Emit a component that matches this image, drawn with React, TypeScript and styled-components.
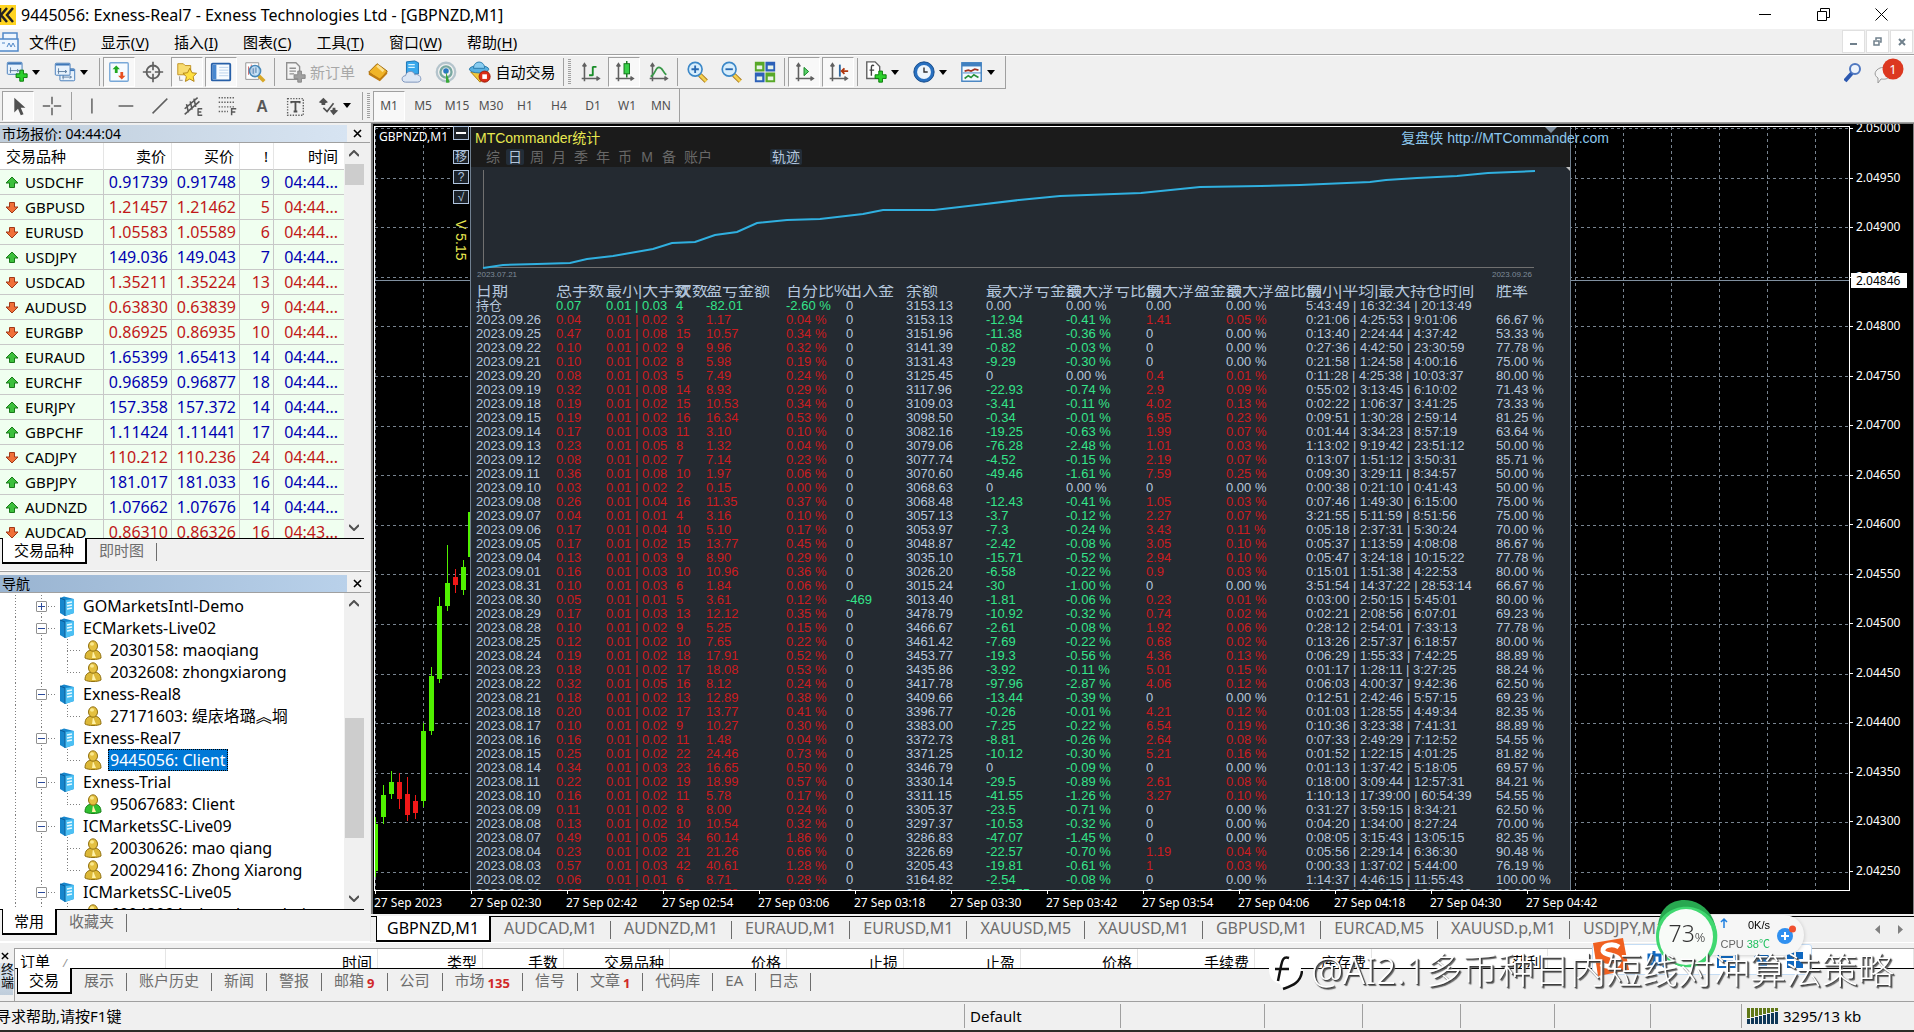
import React from "react";
import styled, { createGlobalStyle, css } from "styled-components";

const ui = `"Noto Sans", "Noto Sans CJK SC", sans-serif`;
const arial = `"Liberation Sans", "Noto Sans CJK SC", sans-serif`;

const Global = createGlobalStyle`
  *, *::before, *::after { box-sizing: border-box; }
  html, body, #root { height: 100%; margin: 0; }
  body { overflow: hidden; background: #f0f0f0; font: 15px/20px ${ui}; color: #000; }
  button { font: inherit; color: inherit; border: 0; background: none; padding: 0; margin: 0; white-space: nowrap; }
  ul { list-style: none; margin: 0; padding: 0; }
  svg { display: block; flex: none; }
`;

/* ---------- frame ---------- */
const Window = styled.div`
  display: flex; flex-direction: column; height: 100%; min-width: 1200px;
  background: #f0f0f0; border-bottom: 2px solid #2c2c26; overflow: hidden;
`;
const TitleBar = styled.header`
  display: flex; align-items: center; height: 29px; background: #fff; flex: none; padding-right: 4px;
`;
const Title = styled.h1`
  margin: 0 auto 0 5px; font-size: 16px; line-height: 28px; font-weight: 400; white-space: nowrap;
`;
const WinButton = styled.button`
  width: 58px; height: 28px; display: grid; place-items: center;
`;
const MenuBar = styled.nav`
  display: flex; align-items: center; height: 26px; flex: none; border-bottom: 1px solid #a0a0a0;
`;
const MenuItem = styled.button`
  margin-left: 10px; margin-right: 15px; line-height: 24px;
  u { text-underline-offset: 2px; }
`;
const MdiButtons = styled.div`
  display: flex; gap: 1px; margin-left: auto; padding-right: 1px;
`;
const MdiButton = styled.button`
  width: 23px; height: 23px; background: #fff; border: 1px solid #e0e0e0; display: grid; place-items: center;
`;

/* ---------- toolbars ---------- */
const Bars = styled.div`
  flex: none; border-top: 1px solid #fff; display: flex; flex-direction: column; border-bottom: 1px solid #a0a0a0;
`;
const BarLine = styled.div`
  display: flex; height: 33px; justify-content: space-between;
`;
const Bar = styled.div<{ $lined?: boolean }>`
  display: flex; align-items: center; gap: 2px; height: 33px; padding: 0 2px;
  border-right: 1px solid #a0a0a0;
  ${(p) => p.$lined && css`border-bottom: 1px solid #a0a0a0;`}
`;
const Tool = styled.button<{ $on?: boolean; $w?: number; $menu?: boolean }>`
  display: flex; align-items: center; justify-content: center; gap: 3px; flex: none;
  width: ${(p) => p.$w ?? (p.$menu ? 46 : 32)}px; height: 30px; color: #505050; font-size: 12px;
  ${(p) => p.$menu && css`justify-content: flex-start; padding-left: 3px; color: #000;`}
  ${(p) => p.$on && css`
    background: #f8f8f8; border: 1px solid #a0a0a0; border-right-color: #fff; border-bottom-color: #fff;
  `}
`;
const LabelTool = styled(Tool)<{ $off?: boolean }>`
  font-size: 15px; color: ${(p) => (p.$off ? "#a8a8a8" : "#000")};
`;
const Sep = styled.span`
  width: 1px; height: 28px; background: #a0a0a0; margin: 0 1px; flex: none;
`;
const Grip = styled.span`
  width: 3px; height: 26px; margin: 0 1px; flex: none;
  background: repeating-linear-gradient(#a0a0a0 0 1px, transparent 1px 2px);
`;
const BarEnd = styled.div`
  display: flex; align-items: center; gap: 8px; padding-right: 8px;
`;

/* ---------- docked panels ---------- */
const Main = styled.main`
  flex: 1; min-height: 0; display: flex;
`;
const Dock = styled.div`
  width: 370px; flex: none; display: flex; flex-direction: column;
`;
const Panel = styled.section<{ $grow?: boolean }>`
  display: flex; flex-direction: column; min-height: 0; padding-top: 2px;
  flex: ${(p) => (p.$grow ? "1 1 0" : "0 0 448px")};
  ${(p) => p.$grow && css`border-top: 1px solid #a0a0a0; padding-top: 3px;`}
  border-bottom: 1px solid #fff;
`;
const PanelTitle = styled.header<{ $active?: boolean }>`
  display: flex; height: 18px; flex: none; padding-right: 3px; border-bottom: 1px solid #a0a0a0;
  h2 {
    margin: 0; flex: 1; font-size: 14px; font-weight: 400; line-height: 17px; padding-left: 2px;
    background: ${(p) =>
      p.$active ? "linear-gradient(90deg,#99b4d1,#b9d1ea)" : "linear-gradient(90deg,#bfcddb,#d7e4f2)"};
  }
  button { width: 20px; display: grid; place-items: center; }
`;
const PanelBody = styled.div`
  flex: 1; min-height: 0; display: flex; overflow: hidden; background: #fff; margin-right: 6px;
  border-bottom: 1px solid #000;
`;
const TabRow = styled.div`
  display: flex; height: 31px; flex: none; padding-left: 2px; align-items: flex-start;
`;
const Tab = styled.button<{ $on?: boolean }>`
  height: 22px; padding: 0 13px 0 12px; font-size: 15px; line-height: 22px; color: #6d6d6d; flex: none;
  display: flex; align-items: center; position: relative;
  &::after { content: ""; position: absolute; right: 0; top: 4px; height: 18px; width: 1px; background: #6d6d6d; }
  ${(p) => p.$on && css`
    color: #000; background: #fff; border: 1px solid #000; border-width: 0 2px 2px 1px; margin-top: -1px; height: 26px;
    padding: 0 11px;
    &::after { display: none; }
  `}
`;
const Count = styled.b`
  color: #d02828; font-size: 13px; padding: 6px 0 0 3px;
`;
const Scroll = styled.div`
  width: 20px; flex: none; background: #f0f0f0; display: flex; flex-direction: column; align-items: center;
  svg { margin: 7px 0; }
`;
const Thumb = styled.span<{ $before: number; $size: number }>`
  width: 19px; height: ${(p) => p.$size}px; margin-top: ${(p) => p.$before}px; margin-bottom: auto; background: #cdcdcd;
`;

/* ---------- market watch ---------- */
const Quotes = styled.table`
  width: 344px; table-layout: fixed; border-collapse: separate; border-spacing: 0; flex: none; align-self: flex-start;
  th, td {
    height: 25px; padding: 0 3px 0 0; text-align: right; font-weight: 400; line-height: 20px; white-space: nowrap;
    border-right: 1px solid #c8c8c8; border-bottom: 1px solid #c8c8c8; overflow: hidden;
  }
  th { height: 27px; font-size: 15px; border-right-color: #e5e5e5; padding-right: 5px; }
  td { font-size: 16px; }
  th:first-child { text-align: left; padding-left: 6px; }
  td:last-child, th:last-child { border-right: 0; padding-right: 6px; }
`;
const QuoteRow = styled.tr<{ $up: boolean }>`
  background: #f0fff0; color: ${(p) => (p.$up ? "#0000b0" : "#c01818")};
`;
const SymbolCell = styled.span`
  display: flex; align-items: center; gap: 6px; padding-left: 5px; color: #000; font-size: 15px;
`;

/* ---------- navigator ---------- */
const Tree = styled.ul`
  flex: 1; min-width: 0; padding-top: 2px;
`;
const dots = "repeating-linear-gradient(#808080 0 1px, transparent 1px 3px)";
const dotsH = "repeating-linear-gradient(90deg, #808080 0 1px, transparent 1px 3px)";
const Node = styled.li<{ $child?: boolean; $last?: boolean }>`
  height: 22px; display: flex; align-items: center; white-space: nowrap; font-size: 16px;
  background:
    ${dots} 15px 0 / 1px 22px no-repeat,
    ${dots} 41px 0 / 1px 22px no-repeat,
    ${dotsH} ${(p) => (p.$child ? "67px 11px / 15px 1px" : "48px 11px / 8px 1px")} no-repeat
    ${(p) => p.$child && css`, ${dots} 67px 0 / 1px ${p.$last ? 11 : 22}px no-repeat`};
  padding-left: ${(p) => (p.$child ? 84 : 36)}px;
`;
const Expander = styled.button`
  width: 11px; height: 11px; border: 1px solid #919191; background: #fff; color: #2b4a9b; border-radius: 1px;
  margin-right: 12px; display: grid; place-items: center;
`;
const NodeLabel = styled.span<{ $on?: boolean }>`
  line-height: 20px; padding: 0 1px; border: 1px solid transparent; margin-left: 6px;
  ${(p) => p.$on && css`background: #0078d7; color: #fff; border: 1px dotted #000;`}
`;

/* ---------- chart ---------- */
const ChartColumn = styled.div`
  flex: 1; min-width: 0; display: flex; flex-direction: column; border-left: 1px solid #e8e8e8;
`;
const ChartWindow = styled.div`
  flex: 1; min-height: 0; background: #000; overflow: hidden; border: 2px solid #808080; border-width: 1px 1px 0 2px;
  padding: 2px 0 0 1px; display: grid; grid-template: 1fr 23px / 1fr 63px; color: #fff; font-size: 12px; line-height: 16px;
`;
const Plot = styled.div`
  position: relative; border: 1px solid #fff; min-height: 0;
`;
const Canvas = styled.svg`
  position: absolute; inset: 0; width: 100%; height: 100%;
`;
const PlotName = styled.span`
  position: absolute; left: 4px; top: 2px; font-size: 12px;
`;
const SideTools = styled.div`
  position: absolute; left: 78px; top: -1px; display: flex; flex-direction: column; gap: 6px; color: #b0c4de;
`;
const SideButton = styled.button`
  width: 16px; height: 14px; border: 1px solid #b0c4de; background: #1c2229; font: 12px/12px ${arial};
  display: grid; place-items: center;
  &:first-child { margin-bottom: 4px; }
`;
const Version = styled.span`
  writing-mode: vertical-rl; color: #e8e850; font: 14px/16px ${arial}; margin-top: 10px;
`;
const PriceAxis = styled.div`
  margin-top: -6px; padding-bottom: 12px; display: flex; flex-direction: column; justify-content: space-between;
  position: relative;
  span { padding-left: 6px; position: relative; }
  span::before { content: ""; position: absolute; left: 0; top: 8px; width: 3px; height: 1px; background: #fff; }
`;
const LastPrice = styled.output`
  position: absolute; left: 1px; top: 153px; width: 56px; height: 15px; line-height: 15px; padding-left: 5px; background: #fff; color: #000;
`;
const TimeAxis = styled.div`
  display: flex; overflow: hidden; grid-column: 1 / 3;
  span { width: 96px; flex: none; white-space: nowrap; padding-top: 4px; position: relative; }
  span::before { content: ""; position: absolute; left: 1px; top: 0; height: 3px; width: 1px; background: #fff; }
`;

/* ---------- statistics overlay ---------- */
const Stats = styled.section`
  position: absolute; left: 95px; top: 0; bottom: 0; width: 1101px; background: #242a31; color: #b4c6dc;
  border: 1px solid #708090; border-width: 0 1px; font: 13px/14px ${arial}; display: flex; flex-direction: column;
`;
const StatsHead = styled.header`
  background: #1b1b1b; height: 40px; flex: none;
`;
const StatsTitle = styled.div`
  display: flex; justify-content: space-between; height: 22px; align-items: center; padding-left: 4px; margin-right: -39px;
  font-size: 14px; line-height: 22px; color: #e8e850;
  a { color: #8cc8ee; text-decoration: none; white-space: nowrap; }
`;
const StatsTabs = styled.div`
  display: flex; gap: 4px; padding-left: 13px;
`;
const StatsTab = styled.button<{ $on?: boolean; $far?: boolean }>`
  min-width: 18px; height: 16px; padding: 0 2px; font-size: 14px; line-height: 16px; color: #686868; border-radius: 2px;
  ${(p) => p.$on && css`color: #b4c6dc; background: #232d38;`}
  ${(p) => p.$far && css`margin-left: 52px;`}
`;
const CurveDates = styled.div`
  display: flex; justify-content: space-between; height: 15px; flex: none; padding: 0 38px 0 6px;
  font-size: 8px; line-height: 10px; color: #7f8b99;
`;
const StatsClip = styled.div`
  flex: 1; min-height: 0; overflow: hidden; padding-left: 5px;
`;
const StatsTable = styled.table`
  table-layout: fixed; width: 1090px; border-collapse: collapse;
  th, td { height: 14px; padding: 0; line-height: 14px; text-align: left; font-weight: 400; white-space: nowrap; }
  th { font-size: 16px; line-height: 12px; vertical-align: top; }
`;
type Tone = "plain" | "up" | "down";
const tones: Record<Tone, string> = { plain: "#b4c6dc", up: "#cc1c20", down: "#34e48a" };
const StatCell = styled.td<{ $tone: Tone }>`
  color: ${(p) => tones[p.$tone]};
`;

const ChartTabs = styled(TabRow)`
  height: 26px; border-top: 1px solid #000; background: #f0f0f0; padding: 0 0 0 5px; flex: none; margin-top: 2px;
`;
const ChartTab = styled(Tab)`
  padding: 0 14px 0 13px; font-size: 16px;
  ${(p) => p.$on && css`padding: 0 10px;`}
`;
const TabArrows = styled.div`
  margin-left: auto; display: flex; gap: 18px; padding: 8px 11px;
`;

/* ---------- terminal ---------- */
const Terminal = styled.section`
  flex: none; height: 59px; display: flex; padding-top: 5px; border-top: 1px solid #fff;
`;
const TerminalGrip = styled.div`
  width: 14px; flex: none; display: flex; flex-direction: column; align-items: flex-start;
  button { height: 15px; width: 9px; display: grid; place-items: center; }
  span {
    writing-mode: vertical-rl; height: 32px; width: 13px; font-size: 13px; line-height: 13px;
    background: linear-gradient(0deg,#bfcddb,#d7e4f2);
  }
`;
const TerminalBody = styled.div`
  flex: 1; min-width: 0; display: flex; flex-direction: column; border-left: 1px solid #a0a0a0;
`;
const Orders = styled.div`
  height: 21px; flex: none; overflow: hidden; background: #fff; border-top: 1px solid #a0a0a0; border-bottom: 1px solid #000;
`;
const OrdersTable = styled.table`
  table-layout: fixed; width: 100%; border-spacing: 0;
  th { font-weight: 400; padding: 0 5px; height: 25px; text-align: right; border-right: 1px solid #e5e5e5; white-space: nowrap; }
  th:first-child { text-align: left; }
  i { margin-left: 13px; color: #909090; font-size: 11px; }
`;
const StatusBar = styled.footer`
  flex: none; height: 29px; border-top: 1px solid #a0a0a0; display: flex; align-items: center; line-height: 26px; overflow: hidden;
`;
const StatusCell = styled.span<{ $w?: number }>`
  ${(p) => (p.$w ? css`width: ${p.$w}px; border-left: 1px solid #a0a0a0; padding-left: 5px;` : css`flex: 1; margin-left: -4px;`)}
  height: 24px; line-height: 24px; display: flex; align-items: center; gap: 5px; white-space: nowrap;
`;

/* ---------- floating items ---------- */
const Watermark = styled.div`
  position: fixed; right: 20px; bottom: 37px; display: flex; align-items: center; gap: 8px; color: #fff; z-index: 3;
  font: 300 36px/48px ${ui}; white-space: nowrap; text-shadow: 1px 1px 1px #333, 2px 2px 1px #666;
`;
const Ime = styled.div`
  position: fixed; right: 102px; bottom: 57px; width: 220px; height: 31px; background: #fff; border: 1px solid #c4dcf4;
  border-radius: 3px; display: flex; align-items: center; gap: 17px; z-index: 1;
  svg:first-child { margin: -6px 0 0 -1px; }
`;
const Monitor = styled.div`
  position: fixed; right: 110px; bottom: 61px; z-index: 2; display: flex; align-items: center;
`;
const Ball = styled.div`
  position: relative; width: 66px; height: 72px; margin-right: -14px; display: grid; place-items: center; z-index: 1;
  svg { position: absolute; inset: 0; }
  span { position: relative; font-size: 23px; font-weight: 300; color: #333; small { font-size: 13px; } }
`;
const Pill = styled.div`
  display: flex; align-items: center; height: 40px; width: 98px; border-radius: 0 20px 20px 0; background: #f6f6f6;
  padding: 0 8px 0 19px; gap: 6px; justify-content: flex-end; box-shadow: 0 1px 4px #0003;
  font: 11px/19px ${arial};
`;
const Readings = styled.div`
  display: flex; flex-direction: column; white-space: nowrap; color: #666;
  div { display: flex; justify-content: space-between; color: #000; }
  em { font-style: normal; color: #22c060; }
`;

/* ---------- icons ---------- */
const Ico = ({ children, s = 24 }: { children: React.ReactNode; s?: number }) => (
  <svg width={s} height={s} viewBox="-1 -1 26 26" fill="none">{children}</svg>
);
const Caret = () => <svg width="8" height="5" viewBox="0 0 8 5"><path d="M0 0h8L4 5z" /></svg>;
const Cross = ({ s = 9 }: { s?: number }) => (
  <svg width={s} height={s} viewBox="0 0 9 9" stroke="#000" strokeWidth="1.6"><path d="M1 1l7 7M8 1L1 8" /></svg>
);
const Chevron = ({ down }: { down?: boolean }) => (
  <svg width="10" height="7" viewBox="0 0 10 7" fill="none" stroke="#505050" strokeWidth="2">
    <path d={down ? "M0 1l5 5 5-5" : "M0 6l5-5 5 5"} />
  </svg>
);
const Arrow = ({ up }: { up: boolean }) => (
  <svg width="14" height="13" viewBox="0 0 14 13" strokeWidth="1">
    {up
      ? <path d="M7 1l6 6H9.500v4.500h-5V7H1z" fill="#3cc03c" stroke="#187818" />
      : <path d="M7 12l6-6H9.500V1.500h-5V6H1z" fill="#f07038" stroke="#a03818" />}
  </svg>
);
const Server = () => (
  <svg width="16" height="20" viewBox="0 0 16 20">
    <path d="M1 2l4-1.500L15 3v14l-9 3-5-3z" fill="#1686cc" /><path d="M6 4l9-1v14l-9 3z" fill="#4cc0f4" />
    <path d="M8 7l5-1M8 10l5-1M8 13l5-1" stroke="#e8faff" strokeWidth="1.500" />
    <path d="M1 2l5 2v16" fill="none" stroke="#0c5c98" />
  </svg>
);
const Person = ({ online }: { online?: boolean }) => (
  <svg width="18" height="20" viewBox="0 0 18 20">
    <path d="M1 18c0-5 2-8 8-8s8 3 8 8c-3 2-13 2-16 0z" fill={online ? "#30c030" : "#dcb838"} stroke={online ? "#188018" : "#907010"} />
    <path d="M9 11l3 7H8z" fill="#fff2a8" />
    <ellipse cx="9" cy="6" rx="4.500" ry="5.200" fill="#e4c040" stroke="#907010" />
    <ellipse cx="8" cy="4" rx="2" ry="1.800" fill="#fae88c" />
  </svg>
);
const Axes = () => <path d="M6 4v18M3 19h18M4 6l2-3 2 3M19 17l3 2-3 2" stroke="#606060" strokeWidth="1.700" />;
const Plus = ({ x, y }: { x: number; y: number }) => (
  <path transform={`translate(${x} ${y})`} d="M4 0h4v4h4v4H8v4H4V8H0V4h4z" fill="#2cd02c" stroke="#087808" />
);
const Win = ({ x, y }: { x: number; y: number }) => (
  <g transform={`translate(${x} ${y})`}><rect x=".5" y=".5" width="16" height="13" rx="1" fill="#e8f2fc" stroke="#4078b8" /><path d="M1 2h15" stroke="#4078b8" strokeWidth="2" /><path d="M3 9.500h10M4 6v6M11 8l2 1.500-2 1.500" stroke="#5a7ca0" /></g>
);
const Glass = ({ minus }: { minus?: boolean }) => (
  <Ico>
    <path d="M15 15l7 7" stroke="#a87818" strokeWidth="5" /><path d="M15 15l7 7" stroke="#f4d050" strokeWidth="3" />
    <circle cx="10" cy="9" r="7.500" fill="#d8eefc" stroke="#3c88c8" strokeWidth="1.800" />
    <path d={minus ? "M6 9h8" : "M6 9h8M10 5v8"} stroke="#2868b0" strokeWidth="2" />
  </Ico>
);
const icons: Record<string, React.ReactNode> = {
  newChart: <Ico><Win x={1} y={1} /><Plus x={11} y={10} /></Ico>,
  profiles: <Ico><Win x={6} y={8} /><Win x={1} y={2} /></Ico>,
  watch: <Ico><rect x="2" y="2" width="20" height="20" rx="1" fill="#f6fbff" stroke="#78a8d8" strokeWidth="1.500" /><path d="M9 5l4 4h-2.500v4h-3V9H5z" fill="#20a820" /><path d="M15 20l4-4h-2.500v-4h-3v4H11z" fill="#e85020" /></Ico>,
  target: <Ico><circle cx="12" cy="12" r="7" stroke="#606060" strokeWidth="2" /><path d="M12 1v9M12 14v9M1 12h9M14 12h9" stroke="#606060" strokeWidth="1.800" /></Ico>,
  favs: <Ico><path d="M2 3h6l2 2h6v10H2z" fill="#f8dc70" stroke="#c09020" /><path d="M4 17v4h4" stroke="#333" strokeDasharray="1 1" /><path d="M15 8l2.400 4.800 5 .6-3.700 3.600 1 5.200-4.700-2.600-4.700 2.600 1-5.200-3.700-3.600 5-.6z" fill="#ffe040" stroke="#b08010" /></Ico>,
  nav: <Ico><rect x="2" y="3" width="20" height="18" rx="1" fill="#f8fcff" stroke="#2860a8" strokeWidth="2" /><path d="M3 4h4v16H3z" fill="#4888d0" /><path d="M10 7h10M10 10h10M10 13h10M10 16h10" stroke="#b8d0ec" /></Ico>,
  tester: <Ico><path d="M2 2h14v18H2z" fill="#fff" stroke="#909090" /><path d="M5 6v9M8 4v9M11 7v9" stroke="#d06060" /><path d="M16 16l6 6" stroke="#d8a828" strokeWidth="4" /><circle cx="12" cy="11" r="6" fill="#b8dcf8cc" stroke="#4888b8" strokeWidth="1.800" /><path d="M10 8v6M13 7v6" stroke="#4070a0" /></Ico>,
  order: <Ico><path d="M3 2h10l4 4v14H3z" fill="#f4f4f4" stroke="#909090" strokeWidth="1.500" /><path d="M6 8h7M6 11h7M6 14h5" stroke="#909090" strokeWidth="1.500" /><path d="M15 11h4v4h4v4h-4v4h-4v-4h-4v-4h4z" fill="#a0a0a0" stroke="#888" /></Ico>,
  book: <Ico><path d="M2 12L11 3l11 8-8 10z" fill="#f0b428" stroke="#98640c" /><path d="M2 12l12 7 8-8v3l-8 8L2 15z" fill="#c07c10" /><path d="M11 5l7 6" stroke="#fce08c" strokeWidth="3" /></Ico>,
  cloud: <Ico><path d="M6 1l9-1 4 2v12H6z" fill="#38a8ec" stroke="#1870b0" /><path d="M8 4h7M8 7h7" stroke="#d8f4ff" strokeWidth="1.500" /><path d="M5 23c-5 0-5-7 0-7 1-6 9-6 10-1 7-2 9 8 3 8z" fill="#dce6f4" stroke="#7890b8" /></Ico>,
  signal: <Ico><circle cx="12" cy="12" r="10" stroke="#b4c4cc" strokeWidth="2.500" /><circle cx="12" cy="12" r="6" stroke="#78a8a0" strokeWidth="2.500" /><circle cx="12" cy="11" r="3" fill="#2878c0" /><path d="M12 12l4 11c-2 1-4 1-4 0z" fill="#38a838" /></Ico>,
  auto: <Ico><path d="M2 12l10 11 9-11z" fill="#f4c838" stroke="#a87c10" /><ellipse cx="11" cy="9" rx="10.500" ry="4" fill="#58b0e0" stroke="#2878a8" /><path d="M5 8c0-9 12-9 12 0z" fill="#88ccf0" stroke="#2878a8" /><circle cx="17" cy="17" r="6" fill="#dc2c14" stroke="#981808" /><path d="M14.500 14.500h5v5h-5z" fill="#fff" /></Ico>,
  bars: <Ico><Axes /><path d="M15 6v10M15 6.500h4M11 15.500h4" stroke="#188c28" strokeWidth="2" /></Ico>,
  candles: <Ico><Axes /><path d="M15 0v18" stroke="#107018" strokeWidth="1.500" /><rect x="12" y="3" width="6" height="11" fill="#38d048" stroke="#107018" /></Ico>,
  line: <Ico><Axes /><path d="M4 17c5-2 5-10 9-10s4 5 8 8" stroke="#389848" strokeWidth="1.800" /></Ico>,
  zoomIn: <Glass />,
  zoomOut: <Glass minus />,
  tile: <Ico><path d="M1 1h10.500v10.500H1zM12.500 12.500H23V23H12.500z" fill="#58a828" /><path d="M12.500 1H23v10.500H12.500zM1 12.500h10.500V23H1z" fill="#2c60b8" /><path d="M3 5h6v4H3zM15 5h6v4h-6zM3 17h6v4H3zM15 17h6v4h-6z" fill="#e8f4e8" /></Ico>,
  scrollEnd: <Ico><Axes /><path d="M12 7v9l5-4.500z" fill="#58d068" stroke="#108020" /></Ico>,
  shift: <Ico><Axes /><path d="M14 4v13" stroke="#3068a0" strokeWidth="2" /><path d="M23 11h-7M19 8l-3 3 3 3" stroke="#b03810" strokeWidth="2" /></Ico>,
  indicators: <Ico><path d="M2 1h9l5 5v13H2z" fill="#fff" stroke="#606060" strokeWidth="1.500" /><path d="M10 5c-3-1-3 1-3 3v8M5 10h5" stroke="#404040" strokeWidth="1.500" /><Plus x={11} y={11} /></Ico>,
  clock: <Ico><circle cx="12" cy="12" r="11" fill="#2870c0" stroke="#104888" /><circle cx="12" cy="12" r="7.500" fill="#eef6fc" /><path d="M12 7v5h4" stroke="#303030" strokeWidth="1.500" /></Ico>,
  template: <Ico><rect x="1" y="2" width="21" height="20" fill="#f4faff" stroke="#4080c0" strokeWidth="1.500" /><path d="M1 4h21" stroke="#4080c0" strokeWidth="4" /><path d="M4 11l4-1 3 1 4-2 4 1" stroke="#a03020" strokeWidth="1.800" /><path d="M4 19l4-3 3 2 3-3 5 3" stroke="#289038" strokeWidth="1.800" /><path d="M2 13h20" stroke="#4080c0" /></Ico>,
  cursor: <Ico><path d="M8 3v16l4-4 3 7 3-1-3-7h5z" fill="#505050" /></Ico>,
  cross: <Ico><path d="M12 2v8M12 14v8M2 12h8M14 12h8" stroke="#606060" strokeWidth="1.600" /></Ico>,
  vline: <Ico><path d="M13 4v16" stroke="#606060" strokeWidth="1.600" /></Ico>,
  hline: <Ico><path d="M5 12h16" stroke="#606060" strokeWidth="1.600" /></Ico>,
  trend: <Ico><path d="M5 20L21 4" stroke="#606060" strokeWidth="1.600" /></Ico>,
  channel: <Ico><path d="M3 15L17 3M3 21L19 7M5 10l2 9M9 7l2 9M13 4l2 9" stroke="#585858" strokeWidth="1.700" /><path d="M17 15h5M17 18.500h4M17 22h5M17.500 15v7" stroke="#585858" strokeWidth="1.500" /></Ico>,
  fib: <Ico><path d="M3 3h18M3 8h18M3 13h18M3 18h10" stroke="#606060" strokeWidth="1.500" strokeDasharray="1.500 1.500" /><path d="M17 22v-7h5M17 18.500h4" stroke="#585858" strokeWidth="1.600" /></Ico>,
  label: <Ico><rect x="4" y="4" width="17" height="18" stroke="#606060" strokeDasharray="1.500 1.500" strokeWidth="1.500" /><path d="M8 9V7.500h9V9M12.500 8v10M10.500 18h4" stroke="#505050" strokeWidth="2" /></Ico>,
  arrows: <Ico><path d="M7 3l5 5-3 1v2H5V9L2 8zM18 22l-4-5 3-1v-2h3v2l3 1z" fill="#505050" /><path d="M7 14l4 4 7-9" stroke="#505050" strokeWidth="1.800" /></Ico>,
};

/* ---------- data ---------- */
const menus = [["文件", "F"], ["显示", "V"], ["插入", "I"], ["图表", "C"], ["工具", "T"], ["窗口", "W"], ["帮助", "H"]];
const frames = ["M1", "M5", "M15", "M30", "H1", "H4", "D1", "W1", "MN"];
const quotes = `USDCHF 0.91739 0.91748 9 u
GBPUSD 1.21457 1.21462 5 d
EURUSD 1.05583 1.05589 6 d
USDJPY 149.036 149.043 7 u
USDCAD 1.35211 1.35224 13 d
AUDUSD 0.63830 0.63839 9 d
EURGBP 0.86925 0.86935 10 d
EURAUD 1.65399 1.65413 14 u
EURCHF 0.96859 0.96877 18 u
EURJPY 157.358 157.372 14 u
GBPCHF 1.11424 1.11441 17 u
CADJPY 110.212 110.236 24 d
GBPJPY 181.017 181.033 16 u
AUDNZD 1.07662 1.07676 14 u
AUDCAD 0.86310 0.86326 16 d`.split("\n").map((l) => l.split(" "));
const servers: { name: string; closed?: boolean; users: string[]; online?: boolean }[] = [
  { name: "GOMarketsIntl-Demo", closed: true, users: [] },
  { name: "ECMarkets-Live02", users: ["2030158: maoqiang", "2032608: zhongxiarong"] },
  { name: "Exness-Real8", users: ["27171603: 缇庡垎璐︽埛"] },
  { name: "Exness-Real7", users: ["9445056: Client"] },
  { name: "Exness-Trial", users: ["95067683: Client"], online: true },
  { name: "ICMarketsSC-Live09", users: ["20030626: mao qiang", "20029416: Zhong Xiarong"] },
  { name: "ICMarketsSC-Live05", users: ["60043094: zhuozhongzhai"] },
];
const statHeads = ["日期", "总手数", "最小|大手数", "次数", "盈亏金额", "百分比%", "出入金", "余额", "最大浮亏金额", "最大浮亏比例", "最大浮盈金额", "最大浮盈比例", "最小|平均|最大持仓时间", "胜率"];
const statWidths = [80, 50, 70, 30, 80, 60, 60, 80, 80, 80, 80, 80, 190, 70];
const stats = `09.26 0.04 0.02 3 1.17 0.04 0 3153.13 -12.94 -0.41 1.41 0.05 0:21:06 4:25:53 9:01:06 66.67
09.25 0.47 0.08 15 10.57 0.34 0 3151.96 -11.38 -0.36 0 0.00 0:13:40 2:24:44 4:37:42 53.33
09.22 0.10 0.02 9 9.96 0.32 0 3141.39 -0.82 -0.03 0 0.00 0:27:36 4:42:50 23:30:59 77.78
09.21 0.10 0.02 8 5.98 0.19 0 3131.43 -9.29 -0.30 0 0.00 0:21:58 1:24:58 4:00:16 75.00
09.20 0.08 0.03 5 7.49 0.24 0 3125.45 0 0.00 0.4 0.01 0:11:28 4:25:38 10:03:37 80.00
09.19 0.32 0.08 14 8.93 0.29 0 3117.96 -22.93 -0.74 2.9 0.09 0:55:02 3:13:45 6:10:02 71.43
09.18 0.19 0.02 15 10.53 0.34 0 3109.03 -3.41 -0.11 4.02 0.13 0:02:22 1:06:37 3:41:25 73.33
09.15 0.19 0.02 16 16.34 0.53 0 3098.50 -0.34 -0.01 6.95 0.23 0:09:51 1:30:28 2:59:14 81.25
09.14 0.17 0.03 11 3.10 0.10 0 3082.16 -19.25 -0.63 1.99 0.07 0:01:44 3:34:23 8:57:19 63.64
09.13 0.23 0.05 8 1.32 0.04 0 3079.06 -76.28 -2.48 1.01 0.03 1:13:02 9:19:42 23:51:12 50.00
09.12 0.08 0.02 7 7.14 0.23 0 3077.74 -4.52 -0.15 2.19 0.07 0:13:07 1:51:12 3:50:31 85.71
09.11 0.36 0.08 10 1.97 0.06 0 3070.60 -49.46 -1.61 7.59 0.25 0:09:30 3:29:11 8:34:57 50.00
09.10 0.03 0.02 2 0.15 0.00 0 3068.63 0 0.00 0 0.00 0:00:38 0:21:10 0:41:43 50.00
09.08 0.26 0.04 16 11.35 0.37 0 3068.48 -12.43 -0.41 1.05 0.03 0:07:46 1:49:30 6:15:00 75.00
09.07 0.04 0.01 4 3.16 0.10 0 3057.13 -3.7 -0.12 2.27 0.07 3:21:55 5:11:59 8:51:56 75.00
09.06 0.17 0.04 10 5.10 0.17 0 3053.97 -7.3 -0.24 3.43 0.11 0:05:18 2:37:31 5:30:24 70.00
09.05 0.17 0.02 15 13.77 0.45 0 3048.87 -2.42 -0.08 3.05 0.10 0:05:37 1:13:59 4:08:08 86.67
09.04 0.13 0.03 9 8.90 0.29 0 3035.10 -15.71 -0.52 2.94 0.10 0:05:47 3:24:18 10:15:22 77.78
09.01 0.16 0.03 10 10.96 0.36 0 3026.20 -6.58 -0.22 0.9 0.03 0:15:01 1:51:38 4:22:53 80.00
08.31 0.10 0.03 6 1.84 0.06 0 3015.24 -30 -1.00 0 0.00 3:51:54 14:37:22 28:53:14 66.67
08.30 0.05 0.01 5 3.61 0.12 -469 3013.40 -1.81 -0.06 0.23 0.01 0:03:00 2:50:15 5:45:01 80.00
08.29 0.17 0.03 13 12.12 0.35 0 3478.79 -10.92 -0.32 0.74 0.02 0:02:21 2:08:56 6:07:01 69.23
08.28 0.10 0.02 9 5.25 0.15 0 3466.67 -2.61 -0.08 1.92 0.06 0:28:12 2:54:01 7:33:13 77.78
08.25 0.12 0.02 10 7.65 0.22 0 3461.42 -7.69 -0.22 0.68 0.02 0:13:26 2:57:37 6:18:57 80.00
08.24 0.19 0.02 18 17.91 0.52 0 3453.77 -19.3 -0.56 4.36 0.13 0:06:29 1:55:33 7:42:25 88.89
08.23 0.18 0.02 17 18.08 0.53 0 3435.86 -3.92 -0.11 5.01 0.15 0:01:17 1:28:11 3:27:25 88.24
08.22 0.32 0.05 16 8.12 0.24 0 3417.78 -97.96 -2.87 4.06 0.12 0:06:03 4:00:37 9:42:36 62.50
08.21 0.18 0.02 13 12.89 0.38 0 3409.66 -13.44 -0.39 0 0.00 0:12:51 2:42:46 5:57:15 69.23
08.18 0.20 0.02 17 13.77 0.41 0 3396.77 -0.26 -0.01 4.21 0.12 0:01:03 1:28:55 4:49:34 82.35
08.17 0.10 0.02 9 10.27 0.30 0 3383.00 -7.25 -0.22 6.54 0.19 0:10:36 3:23:38 7:41:31 88.89
08.16 0.16 0.02 11 1.48 0.04 0 3372.73 -8.81 -0.26 2.64 0.08 0:07:33 2:49:29 7:12:52 54.55
08.15 0.25 0.02 22 24.46 0.73 0 3371.25 -10.12 -0.30 5.21 0.16 0:01:52 1:22:15 4:01:25 81.82
08.14 0.34 0.03 23 16.65 0.50 0 3346.79 0 -0.09 0 0.00 0:01:13 1:37:42 5:18:05 69.57
08.11 0.22 0.02 19 18.99 0.57 0 3330.14 -29.5 -0.89 2.61 0.08 0:18:00 3:09:44 12:57:31 84.21
08.10 0.16 0.02 11 5.78 0.17 0 3311.15 -41.55 -1.26 3.27 0.10 1:10:13 17:39:00 60:54:39 54.55
08.09 0.11 0.02 8 8.00 0.24 0 3305.37 -23.5 -0.71 0 0.00 0:31:27 3:59:15 8:34:21 62.50
08.08 0.13 0.02 10 10.54 0.32 0 3297.37 -10.53 -0.32 0 0.00 0:04:20 1:34:00 8:27:24 70.00
08.07 0.49 0.05 34 60.14 1.86 0 3286.83 -47.07 -1.45 0 0.00 0:08:05 3:15:43 13:05:15 82.35
08.04 0.23 0.02 21 21.26 0.66 0 3226.69 -22.57 -0.70 1.19 0.04 0:05:56 2:29:14 6:36:30 90.48
08.03 0.57 0.03 42 40.61 1.28 0 3205.43 -19.81 -0.61 1 0.03 0:00:33 1:37:02 5:44:00 76.19
08.02 0.06 0.01 6 8.71 0.28 0 3164.82 -2.54 -0.08 0 0.00 1:14:37 4:46:15 11:55:43 100.00
08.01 0.27 0.04 13 44.78 1.44 0 3156.11 -106.55 -3.43 0 0.00 1:48:07 15:15:53 98:17:48 69.23`.split("\n").map((l) => {
  const [d, lots, max, n, pnl, pct, io, bal, dd, ddp, mf, mfp, a, b, c, win] = l.split(" ");
  return ["2023." + d, lots, `0.01 | ${max}`, n, pnl, pct + " %", io, bal, dd, ddp + " %", mf, mfp + " %", `${a} | ${b} | ${c}`, win + " %"];
});
const open = ["持仓", "0.07", "0.01 | 0.03", "4", "-82.01", "-2.60 %", "0", "3153.13", "0.00", "0.00 %", "0.00", "0.00 %", "5:43:49 | 16:32:34 | 20:13:49", ""];
const tone = (col: number, v: string, floating: boolean): Tone => {
  if (col === 0 || col === 7 || col > 11) return "plain";
  if (col < 6) return floating ? "down" : "up";
  if (v.startsWith("-")) return "down";
  return parseFloat(v) === 0 ? "plain" : "up";
};
const prices = Array.from({ length: 16 }, (_, i) => (2.05 - i * 0.0005).toFixed(5));
const times = ["2023", "02:30", "02:42", "02:54", "03:06", "03:18", "03:30", "03:42", "03:54", "04:06", "04:18", "04:30", "04:42"];
/* x, high, body top, body bottom, low, rising */
const candles: [number, number, number, number, number, boolean][] = [
  [0, 690, 697, 744, 750, true], [8, 658, 668, 690, 697, true], [16, 644, 655, 667, 672, true], [24, 646, 655, 672, 682, false],
  [32, 650, 667, 688, 694, false], [40, 668, 674, 686, 692, false], [48, 596, 604, 674, 680, true], [56, 540, 549, 604, 608, true],
  [64, 470, 479, 552, 556, true], [72, 418, 456, 479, 484, true], [80, 442, 450, 458, 466, false], [88, 433, 440, 463, 468, true],
  [95, 385, 385, 430, 440, true],
];
const chartTabs = ["GBPNZD,M1", "AUDCAD,M1", "AUDNZD,M1", "EURAUD,M1", "EURUSD,M1", "XAUUSD,M5", "XAUUSD,M1", "GBPUSD,M1", "EURCAD,M5", "XAUUSD.p,M1", "USDJPY,M15"];
const orderCols: [string, number][] = [["订单", 151], ["时间", 212], ["类型", 105], ["手数", 81], ["交易品种", 106], ["价格", 117], ["止损", 117], ["止盈", 117], ["价格", 117], ["手续费", 117], ["库存费", 117], ["获利", 176]];
const terminalTabs: [string, string?][] = [["交易"], ["展示"], ["账户历史"], ["新闻"], ["警报"], ["邮箱", "9"], ["公司"], ["市场", "135"], ["信号"], ["文章", "1"], ["代码库"], ["EA"], ["日志"]];
const curve = "12,101 32,98 66,97 99,96 116,92 142,89 182,82 201,76 224,75 244,68 266,65 286,56 316,53 349,52 392,47 412,43 463,43 506,38 548,33 589,29 670,26 729,20 790,19 829,18 899,15 915,13 946,11 986,9 1017,6 1064,4";

const T = ({ i, on, menu, label }: { i: string; on?: boolean; menu?: boolean; label?: string }) => (
  <Tool $on={on} $menu={menu} aria-label={label ?? i}>
    {icons[i]}{menu && <Caret />}
  </Tool>
);

const Toolbars = () => (
  <Bars>
    <BarLine>
      <Bar $lined>
        <T i="newChart" menu /><T i="profiles" menu />
        <Sep />
        <T i="watch" on /><T i="target" /><T i="favs" on /><T i="nav" on /><T i="tester" />
        <Sep />
        <LabelTool $w={82} $off>{icons.order}新订单</LabelTool>
        <T i="book" /><T i="cloud" /><T i="signal" />
        <LabelTool $w={96}>{icons.auto}自动交易</LabelTool>
        <Sep /><Grip />
        <T i="bars" /><T i="candles" on /><T i="line" />
        <Sep />
        <T i="zoomIn" /><T i="zoomOut" /><T i="tile" />
        <Sep />
        <T i="scrollEnd" on /><T i="shift" on />
        <Sep />
        <T i="indicators" menu /><T i="clock" menu /><T i="template" menu />
      </Bar>
      <BarEnd>
        <svg width="18" height="20" viewBox="0 0 18 20" fill="none"><path d="M1 18l7-8" stroke="#2c58b0" strokeWidth="4" /><circle cx="11" cy="6" r="5" fill="#eef4fc" stroke="#5078c0" strokeWidth="2" /></svg>
        <svg width="36" height="32" viewBox="0 0 36 32"><path d="M10 11c9-3 14 4 9 9-3 3-6 2-8 2l-3 4v-5c-5-3-3-8 2-10z" fill="#f4f4f4" stroke="#999" /><circle cx="23" cy="12" r="10.500" fill="#dc3820" /><text x="23" y="17" textAnchor="middle" fill="#fff" fontSize="13" fontFamily="Noto Sans">1</text></svg>
      </BarEnd>
    </BarLine>
    <BarLine>
      <Bar>
        <T i="cursor" on /><T i="cross" /><Sep />
        <T i="vline" /><T i="hline" /><T i="trend" /><T i="channel" /><T i="fib" />
        <Tool><svg width="24" height="24"><text x="13" y="18" textAnchor="middle" fontSize="16" fontWeight="700" fontFamily="Liberation Sans" fill="#585858">A</text></svg></Tool>
        <T i="label" /><T i="arrows" menu />
        <Sep /><Grip />
        {frames.map((f) => <Tool key={f} $on={f === "M1"}>{f}</Tool>)}
      </Bar>
    </BarLine>
  </Bars>
);

const MarketWatch = () => (
  <Panel>
    <PanelTitle><h2>市场报价: 04:44:04</h2><button aria-label="关闭"><Cross /></button></PanelTitle>
    <PanelBody>
      <Quotes>
        <colgroup>{[104, 68, 68, 34, 70].map((w, i) => <col key={i} width={w} />)}</colgroup>
        <thead><tr>{["交易品种", "卖价", "买价", "!", "时间"].map((h) => <th key={h}>{h}</th>)}</tr></thead>
        <tbody>
          {quotes.map(([s, bid, ask, spread, dir]) => (
            <QuoteRow key={s} $up={dir === "u"}>
              <td><SymbolCell><Arrow up={dir === "u"} />{s}</SymbolCell></td>
              <td>{bid}</td><td>{ask}</td><td>{spread}</td><td>{s === "AUDCAD" ? "04:43..." : "04:44..."}</td>
            </QuoteRow>
          ))}
        </tbody>
      </Quotes>
      <Scroll><Chevron /><Thumb $before={0} $size={21} /><Chevron down /></Scroll>
    </PanelBody>
    <TabRow><Tab $on>交易品种</Tab><Tab>即时图</Tab></TabRow>
  </Panel>
);

const Navigator = () => (
  <Panel $grow>
    <PanelTitle $active><h2>导航</h2><button aria-label="关闭"><Cross /></button></PanelTitle>
    <PanelBody>
      <Tree>
        {servers.map((s) => (
          <React.Fragment key={s.name}>
            <Node>
              <Expander aria-label={s.name}>
                <svg width="7" height="7" stroke="#2b4a9b"><path d={s.closed ? "M0 3.500h7M3.500 0v7" : "M0 3.500h7"} /></svg>
              </Expander>
              <Server /><NodeLabel>{s.name}</NodeLabel>
            </Node>
            {s.users.map((u, i) => (
              <Node key={u} $child $last={i === s.users.length - 1}>
                <Person online={s.online} /><NodeLabel $on={u.startsWith("9445056")}>{u}</NodeLabel>
              </Node>
            ))}
          </React.Fragment>
        ))}
      </Tree>
      <Scroll><Chevron /><Thumb $before={104} $size={120} /><Chevron down /></Scroll>
    </PanelBody>
    <TabRow><Tab $on>常用</Tab><Tab>收藏夹</Tab></TabRow>
  </Panel>
);

const Statistics = () => (
  <Stats>
    <StatsHead>
      <StatsTitle><span>MTCommander统计</span><a href="http://MTCommander.com">复盘侠 http://MTCommander.com</a></StatsTitle>
      <StatsTabs>
        {["综", "日", "周", "月", "季", "年", "币", "M", "备", "账户"].map((t) => <StatsTab key={t} $on={t === "日"}>{t}</StatsTab>)}
        <StatsTab $on $far>轨迹</StatsTab>
      </StatsTabs>
    </StatsHead>
    <svg width="1099" height="103" fill="none">
      <path d="M12.500 3v97.500H1063" stroke="#707070" />
      <polyline points={curve} stroke="#30b0e0" strokeWidth="2" />
      <path d="M1099-4v8l-4-4z" fill="#c0c0c0" />
    </svg>
    <CurveDates><span>2023.07.21</span><span>2023.09.26</span></CurveDates>
    <StatsClip>
      <StatsTable>
        <colgroup>{statWidths.map((w, i) => <col key={i} width={w} />)}</colgroup>
        <thead><tr>{statHeads.map((h) => <th key={h}>{h}</th>)}</tr></thead>
        <tbody>
          {[open, ...stats].map((r, k) => (
            <tr key={r[0]}>{r.map((v, c) => <StatCell key={c} $tone={tone(c, v, k === 0)}>{v}</StatCell>)}</tr>
          ))}
        </tbody>
      </StatsTable>
    </StatsClip>
  </Stats>
);

const Chart = () => (
  <ChartWindow>
    <Plot>
      <Canvas>
        <g stroke="#788490" strokeDasharray="3 3" shapeRendering="crispEdges">
          {Array.from({ length: 31 }, (_, i) => <line key={i} x1={48 * i + 0.5} x2={48 * i + 0.5} y1="0" y2="100%" />)}
          {prices.map((p, i) => <line key={p} x1="0" x2="100%" y1={Math.round(1 + i * 49.6) + 0.5} y2={Math.round(1 + i * 49.6) + 0.5} />)}
        </g>
        <line x1="0" x2="100%" y1="153.500" y2="153.500" stroke="#8090a0" />
        <g shapeRendering="crispEdges">
          {candles.map(([x, h, t, b, l, up]) => {
            const c = up ? "#50f000" : "#f01818";
            return <g key={x}><line x1={x + 0.5} x2={x + 0.5} y1={h} y2={l} stroke={c} /><rect x={x - 2} y={t} width="5" height={b - t} fill={c} /></g>;
          })}
        </g>
      </Canvas>
      <PlotName>GBPNZD,M1</PlotName>
      <SideTools>
        <SideButton aria-label="最小化"><svg width="10" height="2"><rect width="10" height="2" fill="#fff" /></svg></SideButton>
        <SideButton>移</SideButton><SideButton>?</SideButton><SideButton>√</SideButton>
        <Version>V 5.15</Version>
      </SideTools>
      <Statistics />
      <Canvas pointerEvents="none"><path d="M1170 0h12l-6 6z" fill="#8090a0" /></Canvas>
    </Plot>
    <PriceAxis>
      {prices.map((p) => <span key={p}>{p}</span>)}
      <LastPrice>2.04846</LastPrice>
    </PriceAxis>
    <TimeAxis>{times.map((t) => <span key={t}>27 Sep {t}</span>)}</TimeAxis>
  </ChartWindow>
);

export default function App() {
  return (
    <Window>
      <Global />
      <TitleBar>
        <svg width="16" height="20" viewBox="0 0 16 20"><rect width="16" height="20" fill="#ffd420" /><path d="M0 3v14M7 3L1 10l6 7M13 3l-6 7 6 7" fill="none" stroke="#222" strokeWidth="2.500" /></svg>
        <Title>9445056: Exness-Real7 - Exness Technologies Ltd - [GBPNZD,M1]</Title>
        <WinButton aria-label="最小化"><svg width="12" height="1"><rect width="12" height="1" /></svg></WinButton>
        <WinButton aria-label="还原"><svg width="13" height="13" fill="none" stroke="#000"><path d="M.5 3.500h9v9h-9zM3.500 3V.5h9v9H10" /></svg></WinButton>
        <WinButton aria-label="关闭"><svg width="13" height="13" stroke="#000"><path d="M.5.5l12 12M12.500.5l-12 12" /></svg></WinButton>
      </TitleBar>
      <MenuBar>
        <svg width="19" height="20" viewBox="0 0 19 20" fill="none"><rect x="3" y="1" width="14" height="12" fill="#eef6fe" stroke="#5088c8" strokeWidth="1.500" /><rect x="-2" y="7" width="20" height="12" fill="#eef6fe" stroke="#5088c8" strokeWidth="1.500" /><path d="M2 11h3M7 15l2-4 2 4 2-4 2 4" stroke="#5088c8" /></svg>
        {menus.map(([m, k]) => <MenuItem key={k}>{m}(<u>{k}</u>)</MenuItem>)}
        <MdiButtons>
          <MdiButton aria-label="最小化图表"><svg width="7" height="7"><rect y="5" width="7" height="2" fill="#70808c" /></svg></MdiButton>
          <MdiButton aria-label="还原图表"><svg width="9" height="9" fill="none" stroke="#70808c" strokeWidth="1.500"><path d="M1 4h5v4H1zM3 3V1h5v4H7" /></svg></MdiButton>
          <MdiButton aria-label="关闭图表"><svg width="8" height="8" stroke="#70808c" strokeWidth="2"><path d="M1 1l6 6M7 1L1 7" /></svg></MdiButton>
        </MdiButtons>
      </MenuBar>
      <Toolbars />
      <Main>
        <Dock><MarketWatch /><Navigator /></Dock>
        <ChartColumn>
          <Chart />
          <ChartTabs>
            {chartTabs.map((t, i) => <ChartTab key={t} $on={i === 0}>{t}</ChartTab>)}
            <TabArrows>
              <svg width="5" height="9" fill="#808080"><path d="M5 0v9L0 4.500z" /></svg>
              <svg width="5" height="9" fill="#808080"><path d="M0 0v9l5-4.500z" /></svg>
            </TabArrows>
          </ChartTabs>
        </ChartColumn>
      </Main>
      <Terminal>
        <TerminalGrip><button aria-label="关闭"><Cross s={8} /></button><span>终端</span></TerminalGrip>
        <TerminalBody>
          <Orders>
            <OrdersTable>
              <colgroup>{orderCols.map(([, w], i) => <col key={i} width={w} />)}<col /></colgroup>
              <thead><tr>{orderCols.map(([c], i) => <th key={i}>{c}{i === 0 && <i>/</i>}</th>)}<th /></tr></thead>
            </OrdersTable>
          </Orders>
          <TabRow>
            {terminalTabs.map(([t, n], i) => <Tab key={t} $on={i === 0}>{t}{n && <Count>{n}</Count>}</Tab>)}
          </TabRow>
        </TerminalBody>
      </Terminal>
      <StatusBar>
        <StatusCell>寻求帮助,请按F1键</StatusCell>
        <StatusCell $w={156}>Default</StatusCell>
        <StatusCell $w={144} /><StatusCell $w={98} /><StatusCell $w={98} /><StatusCell $w={94} /><StatusCell $w={96} /><StatusCell $w={91} />
        <StatusCell $w={173}>
          <svg width="31" height="16">
            {Array.from({ length: 8 }, (_, i) => <g key={i}><rect x={i * 4} width="3" height={10 - i} fill="#607818" /><rect x={i * 4} y={11 - i} width="3" height={5 + i} fill="#103858" /></g>)}
          </svg>
          3295/13 kb
        </StatusCell>
      </StatusBar>
      <Ime>
        <svg width="38" height="38" viewBox="0 0 38 38"><path d="M1 5l30-5 6 32-31 6z" fill="#f06020" /><path d="M27 9c-6-4-17-2-16 4 1 5 15 3 16 9 0 7-12 8-18 4" fill="none" stroke="#fff" strokeWidth="5" /></svg>
        <svg width="22" height="20" fill="none" stroke="#1068c0" strokeWidth="3"><path d="M2 5h11v9H2zM7 1v18M18 3v8M16 17l4-4" /></svg>
        <svg width="14" height="20" fill="none" stroke="#1068c0" strokeWidth="2"><rect x="4" y="1" width="6" height="10" rx="3" /><path d="M1 9c0 8 12 8 12 0M7 15v4" /></svg>
        <svg width="20" height="16" fill="none" stroke="#1068c0" strokeWidth="2"><path d="M1 1h18v14H1zM4 5h12M4 9h12" /></svg>
        <svg width="16" height="20" fill="#1068c0"><path d="M4 3l4 2 4-2 4 4-3 2v9H3V9L0 7z" /></svg>
        <svg width="16" height="20" fill="#1068c0"><path d="M0 2h7v7H0zM9 2h7v7H9zM0 11h7v7H0zM9 11h7v7H9z" /></svg>
      </Ime>
      <Monitor>
        <Ball>
          <svg width="66" height="72" viewBox="0 0 66 72">
            <path d="M4 26C6 6 22-2 38 2c12 3 22 14 24 28 2 20-12 36-30 38C14 68 2 48 4 26z" fill="#28a850" />
            <path d="M2 38C2 16 20 6 36 8c18 2 30 18 27 34-2 18-18 28-32 26S2 56 2 38z" fill="#40d870" />
            <ellipse cx="32" cy="38" rx="27" ry="28" fill="#f8fbf8" />
          </svg>
          <span>73<small>%</small></span>
        </Ball>
        <Pill>
          <Readings><div><svg width="8" height="12" viewBox="0 0 8 12" stroke="#2080e0" fill="none" strokeWidth="1.500"><path d="M4 12V3M1 6l3-3 3 3" /></svg>0K/s</div><span>CPU <em>38℃</em></span></Readings>
          <svg width="20" height="20" viewBox="0 0 20 20"><circle cx="9" cy="11" r="8" fill="#3090f0" /><path d="M5 11h8M9 7v8" stroke="#fff" strokeWidth="2" /><circle cx="16.500" cy="4" r="3.500" fill="#f05030" /></svg>
        </Pill>
      </Monitor>
      <Watermark>
        <svg width="36" height="40" viewBox="0 0 36 40" fill="none"><path d="M18 2c10 0 16 7 16 16S28 34 20 34l-4 5-3-6C5 31 2 25 2 18S8 2 18 2z" fill="#fff" /><path d="M22 7c-6-2-7 3-8 8l-3 15M8 18h14M16 38c8-3 18-6 19-18" stroke="#111" strokeWidth="2.500" /></svg>
        @AI2.1多币种日内短线对冲算法策略
      </Watermark>
    </Window>
  );
}
